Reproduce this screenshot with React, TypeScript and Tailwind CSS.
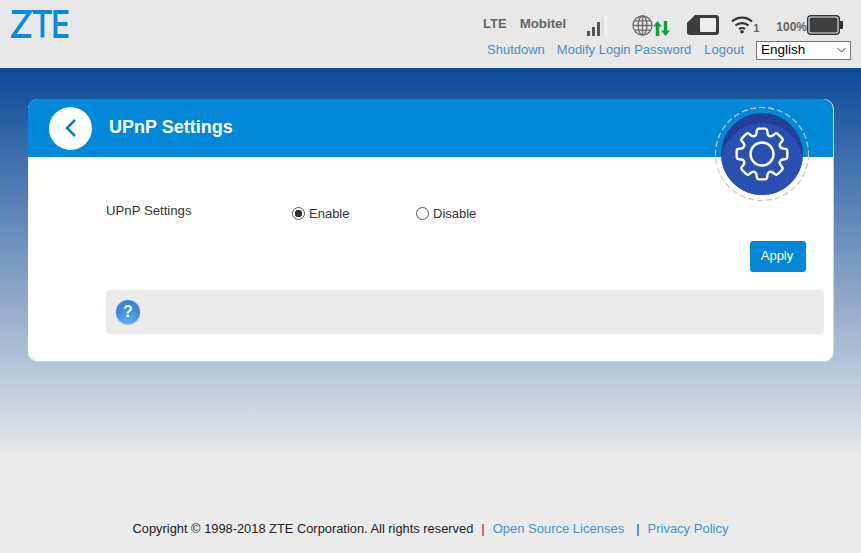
import React from 'react';

// 8-tooth gear outline, each corner rounded by a small fixed radius
const gearPath = () => {
  const cx = 32;
  const cy = 32;
  const pts: [number, number][] = [];
  for (let i = 0; i < 8; i++) {
    const a = (i * Math.PI) / 4 - Math.PI / 2;
    const steps: [number, number][] = [
      [19.5, -0.3],
      [25.8, -0.19],
      [25.8, 0.19],
      [19.5, 0.3],
    ];
    steps.forEach(([r, d]) => {
      pts.push([cx + r * Math.cos(a + d), cy + r * Math.sin(a + d)]);
    });
  }
  const toward = (p: [number, number], q: [number, number], t: number) => {
    const len = Math.hypot(q[0] - p[0], q[1] - p[1]);
    const k = Math.min(t / len, 0.5);
    return `${(p[0] + (q[0] - p[0]) * k).toFixed(2)} ${(p[1] + (q[1] - p[1]) * k).toFixed(2)}`;
  };
  let d = '';
  pts.forEach((p, i) => {
    const prev = pts[(i + pts.length - 1) % pts.length];
    const next = pts[(i + 1) % pts.length];
    d += `${i === 0 ? 'M' : 'L'}${toward(p, prev, 2)}Q${p[0].toFixed(2)} ${p[1].toFixed(2)} ${toward(p, next, 2)}`;
  });
  return d + 'Z';
};

const Logo = () => (
  <svg width="58" height="28" viewBox="0 0 58 28" fill="none" stroke="#0a8ad8" strokeWidth="3.8">
    <path d="M1 2H19L2 26H20.5" />
    <path d="M22 2H41M31.5 2V27.5" />
    <path d="M57.5 2H44.5V26H57.5M44.5 14H56.5" />
  </svg>
);

const StatusIcons = () => (
  <>
    {/* signal */}
    <svg className="ml-[21px]" width="20" height="22" viewBox="0 0 20 22">
      <rect x="0" y="16" width="3" height="5" fill="#555" />
      <rect x="5" y="12" width="3" height="9" fill="#555" />
      <rect x="10" y="7" width="3" height="14" fill="#555" />
      <rect x="14.5" y="3" width="2" height="18" fill="#dcdcdc" />
      <rect x="18" y="0" width="2" height="21" fill="#f2f2f2" />
    </svg>
    {/* globe */}
    <svg className="ml-[25px]" width="21" height="21" viewBox="0 0 21 21" fill="none" stroke="#6c6c6c" strokeWidth="1.3">
      <circle cx="10.5" cy="10.5" r="9.5" />
      <ellipse cx="10.5" cy="10.5" rx="4.4" ry="9.5" />
      <path d="M10.5 1V20M1 10.5H20M2.4 5.8H18.6M2.4 15.2H18.6" />
    </svg>
    {/* up/down arrows */}
    <svg className="mt-[6px]" width="17" height="15" viewBox="0 0 17 15" fill="#0aa33a">
      <path d="M4.5 0L9 5.5H6.2V15H2.8V5.5H0Z" />
      <path d="M12.5 15L8 9.5H10.8V0H14.2V9.5H17Z" />
    </svg>
    {/* sim */}
    <svg className="ml-[17px]" width="32" height="20" viewBox="0 0 32 20">
      <path d="M8 0H29Q32 0 32 3V17Q32 20 29 20H3Q0 20 0 17V8Z" fill="#3d3d3d" />
      <rect x="13" y="3" width="16" height="14" rx="1" fill="#ececec" />
    </svg>
    {/* wifi */}
    <div className="ml-[12px] flex items-end">
      <svg width="22" height="19" viewBox="0 0 22 19" fill="none" stroke="#333" strokeWidth="2.2">
        <path d="M1 6.5C6.5 1.2 15.5 1.2 21 6.5" />
        <path d="M4.5 10.5C8 7.2 14 7.2 17.5 10.5" />
        <path d="M8 14C9.8 12.8 12.2 12.8 14 14" />
        <circle cx="11" cy="16.8" r="1.8" fill="#333" stroke="none" />
      </svg>
      <span className="text-[11px] leading-[12px] font-bold text-[#666]">1</span>
    </div>
    {/* battery */}
    <span className="ml-[17px] text-[12px] leading-[16px] font-bold text-[#666] mt-[4px]">100%</span>
    <svg width="36" height="20" viewBox="0 0 36 20">
      <rect x="0.7" y="0.7" width="31.6" height="18.6" rx="3" fill="#ececec" stroke="#333" strokeWidth="1.4" />
      <rect x="2.5" y="2.5" width="28" height="15" rx="1.5" fill="#3f3f3f" />
      <path d="M33 6H35Q36 6 36 7V13Q36 14 35 14H33Z" fill="#333" />
    </svg>
  </>
);

const Radio = ({ checked, label }: { checked?: boolean; label: string }) => (
  <label className="flex items-center w-[124px] h-[16px]">
    <input
      type="radio"
      name="upnp"
      defaultChecked={checked}
      className="appearance-none w-[13px] h-[13px] rounded-full border border-[#555] bg-white checked:bg-[radial-gradient(circle,#333_0,#333_3.5px,transparent_4px)]"
    />
    <span className="ml-[4px] mt-[2px] text-[13px] leading-[16px] text-[#333]">{label}</span>
  </label>
);

export default function App() {
  return (
    <div className="w-[861px] h-[553px] overflow-hidden flex flex-col bg-[#ebebeb] font-['Liberation_Sans',Arial,sans-serif]">
      <header className="h-[68px] shrink-0 bg-[#e8e8e8] flex justify-between">
        <div className="pl-[11px] pt-[10px]">
          <Logo />
        </div>
        <div className="pr-[10px] flex flex-col items-end">
          <div className="flex items-start h-[40px] pt-[15px] pr-[8px]">
            <span className="text-[13px] leading-[18px] font-bold text-[#666]">LTE</span>
            <span className="ml-[13px] text-[13.3px] leading-[18px] font-bold text-[#666]">Mobitel</span>
            <StatusIcons />
          </div>
          <div className="flex items-center h-[19px] text-[13px] text-[#4a8fd0]">
            <a>Shutdown</a>
            <a className="ml-[12px]">Modify Login Password</a>
            <a className="ml-[13px]">Logout</a>
            <div className="relative ml-[12px] w-[95px] h-[19px]">
              <select className="appearance-none w-full h-full pl-[4px] border border-[#767676] bg-white text-[13.5px] text-black leading-[16px]">
                <option>English</option>
              </select>
              <svg className="absolute right-[5px] top-[7px] pointer-events-none" width="9" height="6" viewBox="0 0 9 6" fill="none" stroke="#444" strokeWidth="1">
                <path d="M0.5 1L4.5 5L8.5 1" />
              </svg>
            </div>
          </div>
        </div>
      </header>

      <main className="flex-1 flex flex-col pt-[31px] bg-[linear-gradient(to_bottom,#0b4a99_0%,#ebebeb_81%)]">
        <section className="relative ml-[28px] w-[806px] h-[263px] bg-white rounded-[10px] border-b border-r border-[#d4d9de] overflow-visible">
          <div className="h-[58px] bg-[#0288d9] rounded-t-[10px] flex items-center pl-[21px]">
            <div className="w-[43px] h-[43px] rounded-full bg-white flex items-center justify-center">
              <svg width="14" height="20" viewBox="0 0 14 20" fill="none" stroke="#0a7fcf" strokeWidth="2.6">
                <path d="M11 2L3 10L11 18" />
              </svg>
            </div>
            <h1 className="ml-[17px] mb-[2px] text-[18px] font-bold text-white">UPnP Settings</h1>
          </div>

          <div className="absolute left-[687px] top-[8px] w-[94px] h-[94px]">
            <svg width="94" height="94" viewBox="0 0 94 94">
              <circle cx="47" cy="47" r="46.5" fill="none" stroke="#c8c8c8" strokeWidth="1.2" strokeDasharray="6 3" />
              <circle cx="47" cy="47" r="41" fill="#233f96" />
              <path d="M6.3 52A41 41 0 0 1 87.7 52A41 41 0 0 1 6.3 52Z" fill="#2a50b2" />
              <g transform="translate(15 15)" fill="none" stroke="#fff" strokeWidth="2.4" strokeLinejoin="round">
                <path d={gearPath()} />
                <circle cx="32" cy="32" r="11.5" />
              </g>
            </svg>
          </div>

          <div className="pl-[78px] pr-[9px]">
            <div className="flex pt-[46px]">
              <div className="w-[186px] text-[13.2px] leading-[16px] text-[#333]">UPnP Settings</div>
              <div className="flex mt-[2px]">
                <Radio checked label="Enable" />
                <Radio label="Disable" />
              </div>
            </div>
            <div className="flex justify-end pr-[18px] mt-[20px]">
              <button className="w-[56px] h-[31px] pb-[2px] pr-[2px] rounded-[3px] bg-[#0288d9] text-[13px] text-white">Apply</button>
            </div>
            <div className="mt-[18px] h-[44px] rounded-[4px] bg-[#ebebeb] flex items-center pl-[10px]">
              <div className="w-[24px] h-[24px] rounded-full bg-[radial-gradient(circle_at_50%_90%,#62aeee_0%,#3a8ade_55%,#2f7fd6_100%)] shadow-[0_1px_1px_rgba(0,0,0,0.25)] flex items-center justify-center text-[16px] leading-none font-bold text-white">
                ?
              </div>
            </div>
          </div>
        </section>

        <footer className="mt-[158px] text-center text-[12.85px] leading-[18px] text-[#222]">
          <span>Copyright © 1998-2018 ZTE Corporation. All rights reserved</span>
          <span className="ml-[8px] text-[#4b2e6e]">|</span>
          <a className="ml-[8px] text-[13px] text-[#4a8fd0]">Open Source Licenses</a>
          <span className="ml-[12px] text-[#2d3e50]">|</span>
          <a className="ml-[8px] text-[13px] text-[#4a8fd0]">Privacy Policy</a>
        </footer>
      </main>
    </div>
  );
}
